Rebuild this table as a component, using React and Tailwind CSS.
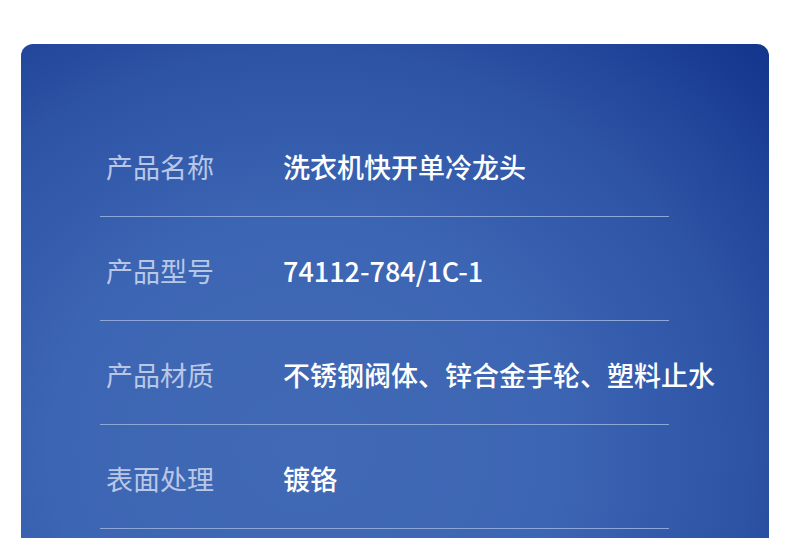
import React from 'react';

const specs = [
  { label: '产品名称', value: '洗衣机快开单冷龙头' },
  { label: '产品型号', value: '74112-784/1C-1' },
  { label: '产品材质', value: '不锈钢阀体、锌合金手轮、塑料止水' },
  { label: '表面处理', value: '镀铬' },
];

export default function App() {
  return (
    <div className="w-[790px] h-[538px] overflow-hidden bg-white pt-[44px] px-[21px] font-['Noto_Sans_CJK_SC',sans-serif]">
      <div className="h-[520px] rounded-t-[12px] pt-[69px] pl-[79px] bg-[radial-gradient(ellipse_85%_110%_at_38%_78%,#4169b5_0%,#3c65b3_40%,#2d53a5_70%,#14368d_100%)]">
        <div className="w-[569px]">
          {specs.map((row) => (
            <div
              key={row.label}
              className="h-[104px] flex items-center pt-[3px] border-b border-[#8ea6d8]"
            >
              <span className="w-[183px] shrink-0 pl-[6px] text-[27px] leading-none text-[#b9c7e6]">
                {row.label}
              </span>
              <span className="text-[27px] leading-none font-medium text-white whitespace-nowrap">
                {row.value}
              </span>
            </div>
          ))}
        </div>
      </div>
    </div>
  );
}
